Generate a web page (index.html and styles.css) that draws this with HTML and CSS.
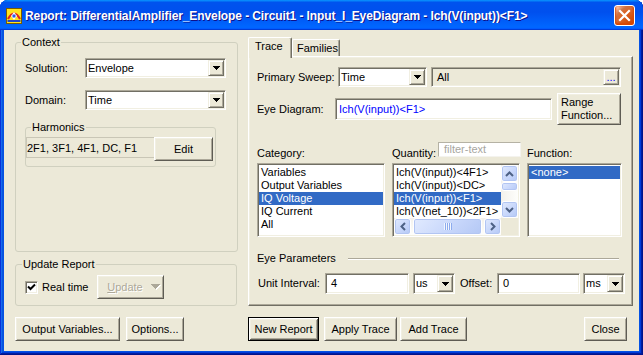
FILE: index.html
```html
<!DOCTYPE html>
<html>
<head>
<meta charset="utf-8">
<title>Report</title>
<link rel="stylesheet" href="styles.css">
</head>
<body>
<div class="window">
  <div class="titlebar">
    <svg class="app-icon" viewBox="0 0 16 16">
      <rect x="0.5" y="0.5" width="15" height="15" fill="#FFE41C" stroke="#7A5C00"/>
      <path d="M2 11 Q8 0 14 11" stroke="#E0241C" stroke-width="2.2" fill="none"/>
      <path d="M8 4 L11 8 L8 12 L5 8 Z" fill="#fff"/>
      <rect x="6.5" y="6.5" width="3" height="3" fill="#2B5BE0"/>
      <path d="M1.5 13 H14.5" stroke="#2346C8" stroke-width="2"/>
    </svg>
    <span class="title">Report: DifferentialAmplifier_Envelope - Circuit1 - Input_I_EyeDiagram - Ich(V(input))&lt;F1&gt;</span>
    <span class="close"><svg viewBox="0 0 19 19"><path d="M5 5 L14 14 M14 5 L5 14" stroke="#fff" stroke-width="2.2" stroke-linecap="square"/></svg></span>
  </div>
  <div class="client">
    <div class="col-left">
      <div class="group context">
        <div class="group-title">Context</div>
        <div class="frow row-solution">
          <span class="lbl">Solution:</span>
          <div class="combo sunken w-ctx"><span class="val">Envelope</span><span class="drop raised"><svg class="tri" viewBox="0 0 7 4"><path d="M0 0H7V1H6V2H5V3H4V4H3V3H2V2H1V1H0Z"/></svg></span></div>
        </div>
        <div class="frow row-domain">
          <span class="lbl">Domain:</span>
          <div class="combo sunken w-ctx"><span class="val">Time</span><span class="drop raised"><svg class="tri" viewBox="0 0 7 4"><path d="M0 0H7V1H6V2H5V3H4V4H3V3H2V2H1V1H0Z"/></svg></span></div>
        </div>
        <div class="group harmonics">
          <div class="group-title">Harmonics</div>
          <div class="harm-row">
            <div class="harm-text">2F1, 3F1, 4F1, DC, F1</div>
            <div class="btn edit">Edit</div>
          </div>
        </div>
      </div>
      <div class="group update">
        <div class="group-title">Update Report</div>
        <div class="update-row">
          <span class="checkbox"><svg viewBox="0 0 9 9"><path d="M1 3.5 L3.5 6 L8 1.5" stroke="#000" stroke-width="2" fill="none"/></svg></span>
          <span class="rt">Real time</span>
          <div class="btn disabled"><span class="dis-text"><u>U</u>pdate</span><svg class="dtri" viewBox="0 0 10 6"><path d="M1 1H10V2H9V3H8V4H7V5H6V6H5V5H4V4H3V3H2V2H1Z" fill="#fff"/><path d="M0 0H9V1H8V2H7V3H6V4H5V5H4V4H3V3H2V2H1V1H0Z" fill="#ACA899"/></svg></div>
        </div>
      </div>
      <div class="btn-row">
        <div class="btn b-outvars">Output Variables...</div>
        <div class="btn b-options">Options...</div>
      </div>
    </div>

    <div class="col-right">
      <div class="tabs">
        <div class="tab active">Trace</div>
        <div class="tab fam">Families</div>
      </div>
      <div class="panel">
        <div class="r1">
          <span class="lbl l-sweep">Primary Sweep:</span>
          <div class="combo sunken w-sweep"><span class="val">Time</span><span class="drop raised"><svg class="tri" viewBox="0 0 7 4"><path d="M0 0H7V1H6V2H5V3H4V4H3V3H2V2H1V1H0Z"/></svg></span></div>
          <div class="allbox sunken"><span class="val all-val">All</span><span class="dots raised">...</span></div>
        </div>
        <div class="r2">
          <span class="lbl l-eye">Eye Diagram:</span>
          <div class="eye-input sunken">Ich(V(input))&lt;F1&gt;</div>
          <div class="btn range-btn"><span>Range</span><span>Function...</span></div>
        </div>
        <div class="r3">
          <span class="c1 lab">Category:</span>
          <div class="c2">
            <span class="lab q-lab">Quantity:</span>
            <div class="filter">filter-text</div>
          </div>
          <span class="c3 lab">Function:</span>
        </div>
        <div class="r4">
          <div class="listbox sunken cat">
            <div class="items">
              <div class="item">Variables</div>
              <div class="item">Output Variables</div>
              <div class="item sel">IQ Voltage</div>
              <div class="item">IQ Current</div>
              <div class="item">All</div>
            </div>
          </div>
          <div class="listbox sunken qty">
            <div class="qgrid">
              <div class="items qitems">
                <div class="item">Ich(V(input))&lt;4F1&gt;</div>
                <div class="item">Ich(V(input))&lt;DC&gt;</div>
                <div class="item sel">Ich(V(input))&lt;F1&gt;</div>
                <div class="item">Ich(V(net_10))&lt;2F1&gt;</div>
              </div>
              <div class="vsb">
                <div class="sbtn"><svg viewBox="0 0 9 6"><path d="M1 5 L4.5 1.5 L8 5" stroke="#4D6185" stroke-width="2" fill="none"/></svg></div>
                <div class="sthumb vthumb"></div>
                <div class="strack"></div>
                <div class="sbtn"><svg viewBox="0 0 9 6"><path d="M1 1 L4.5 4.5 L8 1" stroke="#4D6185" stroke-width="2" fill="none"/></svg></div>
              </div>
              <div class="hsb">
                <div class="sbtn"><svg viewBox="0 0 6 9"><path d="M5 1 L1.5 4.5 L5 8" stroke="#4D6185" stroke-width="2" fill="none"/></svg></div>
                <div class="sthumb hthumb"><span class="grip"></span></div>
                <div class="sbtn"><svg viewBox="0 0 6 9"><path d="M1 1 L4.5 4.5 L1 8" stroke="#4D6185" stroke-width="2" fill="none"/></svg></div>
              </div>
              <div class="corner"></div>
            </div>
          </div>
          <div class="listbox sunken func">
            <div class="items">
              <div class="item sel">&lt;none&gt;</div>
            </div>
          </div>
        </div>
        <div class="eyeparams">
          <span>Eye Parameters</span>
          <span class="etch"></span>
        </div>
        <div class="unitrow">
          <span class="lbl l-ui">Unit Interval:</span>
          <div class="tin sunken w-ui">4</div>
          <div class="combo sunken w-unit u1"><span class="val">us</span><span class="drop raised"><svg class="tri" viewBox="0 0 7 4"><path d="M0 0H7V1H6V2H5V3H4V4H3V3H2V2H1V1H0Z"/></svg></span></div>
          <span class="lbl l-off">Offset:</span>
          <div class="tin sunken w-off">0</div>
          <div class="combo sunken w-unit u2"><span class="val">ms</span><span class="drop raised"><svg class="tri" viewBox="0 0 7 4"><path d="M0 0H7V1H6V2H5V3H4V4H3V3H2V2H1V1H0Z"/></svg></span></div>
        </div>
      </div>
      <div class="btn-row right-btns">
        <div class="btn btn-default b-new">New Report</div>
        <div class="btn b-apply">Apply Trace</div>
        <div class="btn b-add">Add Trace</div>
        <div class="btn b-close">Close</div>
      </div>
    </div>
  </div>
</div>
</body>
</html>
```

FILE: styles.css
```css
* { box-sizing: border-box; }
html, body { margin: 0; padding: 0; }
body {
  width: 643px; height: 355px; overflow: hidden; background: #fff;
  font-family: "Liberation Sans", Arial, sans-serif;
  font-size: 11px; line-height: 13px; color: #000;
}
.window {
  width: 643px; height: 355px; display: flex; flex-direction: column;
  background: #0552E4; border-radius: 8px 8px 0 0;
  box-shadow: inset -1px -1px #00138c, inset 1px 1px #0831d9, inset -2px -2px #001ea0, inset 2px 2px #166aee, inset -3px -3px #003bda, inset 3px 3px #0855dd;
}
.titlebar {
  height: 30px; flex: none; display: flex; align-items: center;
  padding: 0 8px 0 6px; border-radius: 8px 8px 0 0;
  background: linear-gradient(180deg, #0997ff, #0053ee 8%, #0050ee 40%, #0066ff 88%, #0066ff 93%, #005bff 95%, #003dd7 96%, #003dd7);
}
.app-icon { width: 16px; height: 16px; flex: none; margin-top: 1px; }
.title {
  flex: 1; margin-left: 3px; padding-top: 2px; color: #fff; font-weight: bold;
  font-size: 12px; letter-spacing: -0.1px; white-space: nowrap; overflow: hidden; text-shadow: 1px 1px #0F1089;
}
.close {
  flex: none; width: 21px; height: 21px; border: 1px solid #fff; border-radius: 3px;
  background-image: radial-gradient(circle at 90% 90%, #cc4600 0%, #dc6527 55%, #cd7546 70%, #ffccb2 90%, #fff 100%);
  box-shadow: inset 0 -1px 2px 1px #da4600; display: flex; align-items: center; justify-content: center;
}
.close svg { width: 19px; height: 19px; }

.client {
  flex: none; height: 321px; margin: 0 4px; background: #ECE9D8;
  display: flex; padding-left: 11px;
}
.col-left { width: 223px; display: flex; flex-direction: column; }
.col-right { width: 385px; margin-left: 10px; display: flex; flex-direction: column; }

/* group boxes */
.group { border: 1px solid #D0D0BF; border-radius: 3px; display: flex; flex-direction: column; }
.group-title { margin-top: -7px; align-self: flex-start; background: #ECE9D8; padding: 0 1px; line-height: 13px; }
.context { margin-top: 12px; height: 210px; padding-left: 9px; }
.context > .group-title { margin-left: -4px; }
.frow { display: flex; align-items: center; height: 20px; }
.row-solution { margin-top: 9px; }
.row-domain { margin-top: 12px; }
.frow .lbl { width: 60px; }
.w-ctx { width: 141px; }
.harmonics { margin-top: 17px; width: 191px; height: 40px; }
.harmonics > .group-title { margin-left: 5px; }
.harm-row { margin-top: 3px; display: flex; height: 21px; }
.harm-text { width: 128px; border: 1px solid #C9C6B6; border-right: none; display: flex; align-items: center; padding-top: 1px; }
.edit { width: 59px; height: 21px; }

.update { margin-top: 12px; width: 222px; height: 42px; padding-left: 9px; }
.update > .group-title { margin-left: -3px; }
.update-row { margin-top: 5px; height: 22px; display: flex; align-items: center; }
.checkbox {
  width: 13px; height: 13px; background: #fff; border: 1px solid;
  border-color: #ACA899 #fff #fff #ACA899; box-shadow: inset 1px 1px #716F64, inset -1px -1px #F1EFE2;
  display: flex; align-items: center; justify-content: center;
}
.checkbox svg { width: 9px; height: 9px; }
.rt { margin-left: 4px; width: 55px; }
.disabled { width: 67px; height: 22px; justify-content: flex-start; padding-left: 7px; }
.dis-text { color: #ACA899; text-shadow: 1px 1px #fff; }
.dtri { width: 10px; height: 6px; margin-left: 8px; margin-top: -1px; shape-rendering: crispEdges; }

/* buttons */
.sunken {
  background: #fff; border: 1px solid; border-color: #ACA899 #fff #fff #ACA899;
  box-shadow: inset 1px 1px #716F64, inset -1px -1px #F1EFE2;
}
.raised {
  background: #ECE9D8; border: 1px solid; border-color: #F1EFE2 #716F64 #716F64 #F1EFE2;
  box-shadow: inset 1px 1px #fff, inset -1px -1px #ACA899;
}
.btn {
  display: flex; align-items: center; justify-content: center; height: 24px;
  background: #ECE9D8; border: 1px solid; border-color: #fff #5E5C54 #5E5C54 #fff;
  box-shadow: inset 1px 1px #F1EFE2, inset -1px -1px #ACA899; white-space: nowrap;
}
.btn-default {
  border-color: #000;
  box-shadow: inset 1px 1px #fff, inset -1px -1px #5E5C54, inset 2px 2px #F1EFE2, inset -2px -2px #ACA899;
}
.btn-row { display: flex; margin-top: 11px; height: 24px; }
.b-outvars { width: 105px; }
.b-options { width: 58px; margin-left: 6px; }
.b-new { width: 71px; }
.b-apply { width: 73px; margin-left: 5px; }
.b-add { width: 67px; margin-left: 3px; }
.b-close { width: 43px; margin-left: auto; margin-right: 6px; }

/* combos */
.combo { display: flex; align-items: center; height: 20px; padding: 1px; }
.combo .val { flex: 1; padding-left: 1px; white-space: nowrap; overflow: hidden; }
.drop { flex: none; width: 16px; height: 16px; display: flex; align-items: center; justify-content: center; }
.tri { width: 7px; height: 4px; shape-rendering: crispEdges; }

/* tabs */
.tabs { display: flex; align-items: flex-end; height: 20px; margin-top: 7px; }
.tab {
  height: 18px; padding: 2px 0 0 4px; background: #ECE9D8;
  border: 1px solid; border-bottom: none; border-color: #fff #716F64 #fff #fff;
  box-shadow: inset -1px 0 #ACA899; border-radius: 2px 2px 0 0;
}
.tab.active { width: 44px; height: 21px; margin-bottom: -1px; padding-left: 6px; position: relative; z-index: 1; }
.tab.fam { width: 48px; }
.panel {
  margin-top: -1px; height: 250px; display: flex; flex-direction: column;
  padding: 10px 7px 0 8px; background: #ECE9D8;
  border: 1px solid; border-color: #fff #716F64 #716F64 #fff;
  box-shadow: inset -1px -1px #ACA899, inset 1px 1px #F1EFE2;
}
.r1 { display: flex; align-items: center; height: 20px; }
.l-sweep { width: 81px; }
.w-sweep { width: 89px; }
.allbox { width: 190px; height: 20px; margin-left: 4px; background: #ECE9D8; display: flex; align-items: center; padding: 1px; }
.all-val { flex: 1; padding-left: 4px; }
.dots { width: 16px; height: 16px; color: #0000FF; display: flex; justify-content: center; align-items: flex-end; line-height: 11px; padding-bottom: 1px; }
.r2 { margin-top: 6px; height: 32px; display: flex; align-items: center; }
.l-eye { width: 78px; }
.eye-input { width: 217px; height: 22px; color: #0000FF; padding: 0 0 0 3px; display: flex; align-items: center; }
.range-btn { width: 64px; height: 32px; margin-left: 5px; flex-direction: column; align-items: flex-start; padding-left: 3px; }
.r3 { margin-top: 17px; height: 21px; display: flex; }
.lab { align-self: flex-end; margin-bottom: 3px; }
.c1 { width: 135px; }
.c2 { width: 135px; display: flex; }
.q-lab { width: 46px; }
.filter {
  width: 83px; height: 15px; background: #fff; color: #A7A6A0; padding-left: 5px; line-height: 13px;
  border: 1px solid; border-color: #B5B2A4 #F4F3EE #F4F3EE #B5B2A4;
}
.r4 { display: flex; height: 74px; }
.listbox { padding: 1px; overflow: hidden; }
.cat { width: 128px; }
.qty { width: 128px; margin-left: 7px; }
.func { width: 95px; margin-left: 7px; }
.items { padding-top: 1px; }
.item { height: 13px; line-height: 13px; padding-left: 2px; white-space: nowrap; }
.item.sel { background: #316AC5; color: #fff; }
.qgrid { display: grid; grid-template-columns: 107px 17px; grid-template-rows: 53px 17px; height: 70px; }
.qitems { overflow: hidden; }
.vsb { display: flex; flex-direction: column; background: linear-gradient(to right, #F3F1EC, #FEFEFB); }
.hsb { display: flex; background: linear-gradient(to bottom, #F3F1EC, #FEFEFB); }
.corner { background: #ECE9D8; }
.strack { flex: 1; }
.sbtn, .sthumb {
  border: 1px solid #fff; border-radius: 3px;
  background: linear-gradient(135deg, #E1EAFE 0%, #C8D7FB 55%, #B4C8F5 100%);
  box-shadow: inset 0 0 0 1px #B2C5F2;
}
.sbtn { flex: none; width: 17px; height: 17px; display: flex; align-items: center; justify-content: center; }
.vsb .sbtn svg { width: 9px; height: 6px; }
.hsb .sbtn svg { width: 6px; height: 9px; }
.vthumb { flex: none; height: 9px; }
.hthumb { flex: 1; margin: 0 2px; display: flex; align-items: center; justify-content: center; }
.grip { width: 8px; height: 7px; background: repeating-linear-gradient(to right, #F2F6FE 0 1px, #8CABEE 1px 2px); }
.eyeparams { margin-top: 15px; height: 13px; display: flex; align-items: center; }
.etch { flex: 1; margin: 1px 6px 0 12px; height: 2px; border-top: 1px solid #ACA899; border-bottom: 1px solid #fff; }
.unitrow { margin-top: 8px; height: 21px; display: flex; align-items: center; }
.l-ui { width: 67px; margin-left: 1px; }
.tin { height: 21px; display: flex; align-items: center; padding-left: 5px; }
.w-ui { width: 84px; }
.w-off { width: 83px; }
.w-unit { width: 42px; height: 21px; }
.u1 { margin-left: 4px; }
.l-off { width: 37px; margin-left: 5px; }
.u2 { margin-left: 3px; }
.u1 .drop, .u2 .drop { height: 17px; }
```
